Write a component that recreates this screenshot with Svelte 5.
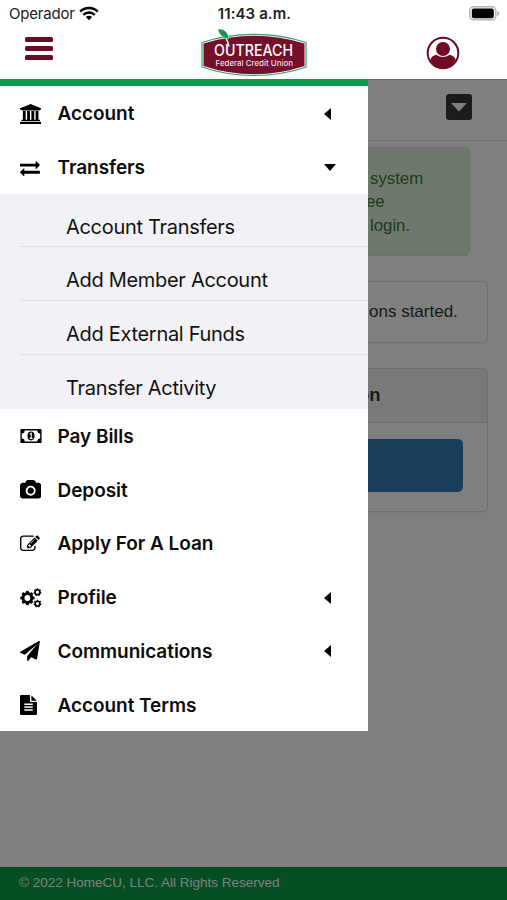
<script lang="ts">
  type MenuItem = {
    label: string;
    icon: string;
    children?: string[];
    expandable?: boolean;
  };

  const menu: MenuItem[] = [
    { label: 'Account', icon: 'bank', expandable: true },
    {
      label: 'Transfers',
      icon: 'exchange',
      expandable: true,
      children: ['Account Transfers', 'Add Member Account', 'Add External Funds', 'Transfer Activity']
    },
    { label: 'Pay Bills', icon: 'money' },
    { label: 'Deposit', icon: 'camera' },
    { label: 'Apply For A Loan', icon: 'edit' },
    { label: 'Profile', icon: 'cogs', expandable: true },
    { label: 'Communications', icon: 'plane', expandable: true },
    { label: 'Account Terms', icon: 'file' }
  ];

  // glyph width in font units, height is always 1792
  const icons: Record<string, { width: number; path: string }> = {
    bank: {
      width: 1920,
      path: 'M960 0l960 384v128h-128q0 26-20.5 45t-48.5 19H197q-28 0-48.5-19T128 512H0V384zM256 640h256v768h128V640h256v768h128V640h256v768h128V640h256v768h59q28 0 48.5 19t20.5 45v64H128v-64q0-26 20.5-45t48.5-19h59V640zm1595 960q28 0 48.5 19t20.5 45v128H0v-128q0-26 20.5-45t48.5-19h1782z'
    },
    exchange: {
      width: 1792,
      path: 'M1792 1184v192q0 13-9.5 22.5t-22.5 9.5h-1376v192q0 13-9.5 22.5t-22.5 9.5q-12 0-24-10l-319-320q-9-9-9-22 0-14 9-23l320-320q9-9 23-9 13 0 22.5 9.5t9.5 22.5v192h1376q13 0 22.5 9.5t9.5 22.5zm0-544q0 14-9 23l-320 320q-9 9-23 9-13 0-22.5-9.5t-9.5-22.5v-192h-1376q-13 0-22.5-9.5t-9.5-22.5v-192q0-13 9.5-22.5t22.5-9.5h1376v-192q0-14 9-23t23-9q12 0 24 10l319 319q9 9 9 23z'
    },
    camera: {
      width: 1920,
      path: 'M960 672q119 0 203.5 84.5t84.5 203.5-84.5 203.5-203.5 84.5-203.5-84.5-84.5-203.5 84.5-203.5 203.5-84.5zm704-416q106 0 181 75t75 181v896q0 106-75 181t-181 75h-1408q-106 0-181-75t-75-181v-896q0-106 75-181t181-75h224l51-136q19-49 69.5-84.5t103.5-35.5h512q53 0 103.5 35.5t69.5 84.5l51 136h224zm-704 1152q185 0 316.5-131.5t131.5-316.5-131.5-316.5-316.5-131.5-316.5 131.5-131.5 316.5 131.5 316.5 316.5 131.5z'
    },
    edit: {
      width: 1792,
      path: 'M888 1184l116-116-152-152-116 116v56h96v96h56zm440-720q-16-16-33 1l-350 350q-17 17-1 33t33-1l350-350q17-17 1-33zm80 594v190q0 119-84.5 203.5t-203.5 84.5h-832q-119 0-203.5-84.5t-84.5-203.5v-832q0-119 84.5-203.5t203.5-84.5h832q63 0 117 25 15 7 18 23 3 17-9 29l-49 49q-14 14-32 8-23-6-45-6h-832q-66 0-113 47t-47 113v832q0 66 47 113t113 47h832q66 0 113-47t47-113v-126q0-13 9-22l64-64q15-15 35-7t20 29zm-96-738l288 288-672 672h-288v-288zm444 132l-92 92-288-288 92-92q28-28 68-28t68 28l152 152q28 28 28 68t-28 68z'
    },
    plane: {
      width: 1792,
      path: 'M1764 11q33 24 27 64l-256 1536q-5 29-32 45-14 8-31 8-11 0-24-5l-453-185-242 295q-18 23-49 23-13 0-22-4-19-7-30.5-23.5t-11.5-36.5v-349l864-1059-1069 925-395-162q-37-14-40-55-2-40 32-59l1664-960q15-9 32-9 20 0 36 11z'
    },
    file: {
      width: 1536,
      path: 'M1468 476q14 14 28 36h-472v-472q22 14 36 28zm-476 164h544v1056q0 40-28 68t-68 28h-1344q-40 0-68-28t-28-68v-1600q0-40 28-68t68-28h800v544q0 40 28 68t68 28zm160 736v-64q0-14-9-23t-23-9h-704q-14 0-23 9t-9 23v64q0 14 9 23t23 9h704q14 0 23-9t9-23zm0-256v-64q0-14-9-23t-23-9h-704q-14 0-23 9t-9 23v64q0 14 9 23t23 9h704q14 0 23-9t9-23zm0-256v-64q0-14-9-23t-23-9h-704q-14 0-23 9t-9 23v64q0 14 9 23t23 9h704q14 0 23-9t9-23z'
    }
  };

  let open = $state('Transfers');

  function toggle(item: MenuItem) {
    if (!item.expandable) return;
    open = open === item.label ? '' : item.label;
  }
</script>

{#snippet gear(cx: number, cy: number, r: number, teeth: number)}
  <circle {cx} {cy} {r} fill="none" stroke="#000" stroke-width={r * 0.68} />
  {#each Array(teeth) as _, i}
    <rect
      x={cx - r * 0.3}
      y={cy - r * 1.62}
      width={r * 0.6}
      height={r * 0.5}
      transform="rotate({(360 / teeth) * i} {cx} {cy})"
    />
  {/each}
{/snippet}

{#snippet menuIcon(name: string)}
  {#if name === 'money'}
    <svg width="22" height="20" viewBox="0 0 22 20">
      <path
        fill-rule="evenodd"
        d="M1 3h20q.6 0 .6.6v12.8q0 .6-.6.6H1q-.6 0-.6-.6V3.600q0-.6.6-.6zM4.700 4.500a3 3 0 0 1-2.900 2.900v5.200a3 3 0 0 1 2.900 2.900h12.600a3 3 0 0 1 2.900-2.900V7.400a3 3 0 0 1-2.900-2.900z"
      />
      <ellipse cx="11" cy="10" rx="3.500" ry="4.400" />
      <path d="M9.800 8.300l1.400-1v4.900M9.600 12.400h3" fill="none" stroke="#fff" stroke-width="1.100" />
    </svg>
  {:else if name === 'cogs'}
    <svg width="22" height="20" viewBox="0 0 22 20">
      {@render gear(7.4, 10, 4.4, 8)}
      {@render gear(17.5, 4.2, 2.4, 7)}
      {@render gear(17.5, 15.6, 2.4, 7)}
    </svg>
  {:else}
    <svg width={icons[name].width / 90} height="19.9" viewBox="0 0 {icons[name].width} 1792">
      <path d={icons[name].path} />
    </svg>
  {/if}
{/snippet}

<div class="screen">
  <div class="status-bar">
    <div class="carrier">
      <span>Operador</span>
      <svg width="20" height="15" viewBox="0 0 20 15">
        <g fill="none" stroke="#000" stroke-width="2.500">
          <path d="M1.200 5.600a12.400 12.400 0 0 1 17.600 0" />
          <path d="M4.300 8.900a8 8 0 0 1 11.400 0" />
        </g>
        <path d="M10 14.200l-3.100-3.100a4.400 4.400 0 0 1 6.200 0z" />
      </svg>
    </div>
    <span class="time">11:43 a.m.</span>
    <svg class="battery" width="31" height="15" viewBox="0 0 31 15">
      <rect x=".8" y=".8" width="26" height="13" rx="3.800" fill="#fff" stroke="#b5b5b5" stroke-width="1.500" />
      <rect x="2.800" y="2.500" width="22" height="9.800" rx="2" />
      <path d="M28.300 5v5q2-.8 2-2.500t-2-2.500z" fill="#aaa" />
    </svg>
  </div>

  <header>
    <button class="burger" aria-label="Menu">
      <i></i><i></i><i></i>
    </button>
    <svg class="logo" width="108" height="50" viewBox="0 0 108 50">
      <path
        d="M2 14.500Q26 6.300 54 6.300t52 8.200v24.500Q82 47.500 54 47.500T2 39z"
        fill="#fff"
        stroke="#2f9f66"
        stroke-width="1.200"
      />
      <path d="M3.500 15.500Q28 7.700 54 7.700t50.500 7.800v22.500Q80 46.200 54 46.200T3.500 38z" fill="#74102b" />
      <path d="M22 5q5 4.500 7 13.500" fill="none" stroke="#e5f0e6" stroke-width="1.600" />
      <path d="M17.800 1q10-.5 11.200 9.700-9-.3-11.200-9.700z" fill="#14974c" stroke="#fff" stroke-width=".4" />
      <text class="logo-name" x="14" y="27.700" textLength="79" lengthAdjust="spacingAndGlyphs">OUTREACH</text>
      <text class="logo-sub" x="15.500" y="37.900" textLength="77.500" lengthAdjust="spacingAndGlyphs">Federal Credit Union</text>
    </svg>
    <svg class="avatar" width="34" height="34" viewBox="0 0 34 34">
      <circle cx="17" cy="17" r="15.300" fill="#fff" stroke="#6d0a26" stroke-width="2" />
      <circle cx="17" cy="13" r="7" fill="#6d0a26" />
      <path d="M4.300 24q1.300-4.500 6-5.300Q16.500 23.500 23.700 18.700q4.700.8 6 5.300Q25.500 32 17 32T4.300 24z" fill="#6d0a26" />
    </svg>
  </header>

  <div class="body">
    <main>
      <div class="toolbar">
        <button class="dropdown" aria-label="More">
          <svg width="16" height="9" viewBox="0 0 16 9"><path d="M0 0h16L8 8.500z" fill="#fff" /></svg>
        </button>
      </div>
      <div class="alert">
        <p>system</p>
        <p class="cut">ee</p>
        <p>login.</p>
      </div>
      <div class="card note">ons started.</div>
      <div class="card panel">
        <h4>on</h4>
        <div class="panel-body"><div class="primary"></div></div>
      </div>
    </main>
    <footer>© 2022 HomeCU, LLC. All Rights Reserved</footer>
    <div class="backdrop"></div>

    <nav>
      {#each menu as item}
        <button class="item" onclick={() => toggle(item)}>
          <span class="icon">{@render menuIcon(item.icon)}</span>
          <span class="label">{item.label}</span>
          {#if item.expandable}
            <span class="caret" class:down={open === item.label}></span>
          {/if}
        </button>
        {#if item.children && open === item.label}
          <ul>
            {#each item.children as child}
              <li>{child}</li>
            {/each}
          </ul>
        {/if}
      {/each}
    </nav>
  </div>
</div>

<style>
  :global(body) {
    margin: 0;
    background: #fff;
  }

  .screen {
    display: flex;
    flex-direction: column;
    width: 507px;
    height: 900px;
    overflow: hidden;
    font-family: 'Liberation Sans', Arial, sans-serif;
  }

  button {
    border: none;
    background: none;
    padding: 0;
    margin: 0;
  }

  svg {
    display: block;
  }

  .status-bar {
    display: grid;
    grid-template-columns: 1fr auto 1fr;
    align-items: center;
    height: 27px;
    padding: 0 7px 0 9px;
    box-sizing: border-box;
    font-family: Inter, sans-serif;
    font-size: 15px;
    color: #222;
  }

  .carrier {
    display: flex;
    align-items: center;
    gap: 4px;
    letter-spacing: -0.2px;
  }

  .time {
    font-weight: 600;
    letter-spacing: 0.1px;
  }

  .battery {
    justify-self: end;
  }

  header {
    display: flex;
    align-items: center;
    justify-content: space-between;
    flex: none;
    height: 52px;
    padding: 0 47px 0 25px;
    box-sizing: border-box;
  }

  .burger {
    display: flex;
    flex-direction: column;
    gap: 4px;
    margin-bottom: 9px;
  }

  .burger i {
    width: 28px;
    height: 5px;
    border-radius: 1.5px;
    background: #6d0a26;
  }

  .logo {
    margin-left: 28px;
    margin-bottom: 1px;
  }

  .logo-name {
    font: 500 15.5px Inter, sans-serif;
    fill: #fff;
  }

  .logo-sub {
    font: 500 7.6px Inter, sans-serif;
    fill: #f3dfe4;
  }

  .body {
    position: relative;
    display: flex;
    flex-direction: column;
    flex: 1;
  }

  main {
    flex: 1;
    border-top: 1px solid #ccc;
  }

  .toolbar {
    display: flex;
    justify-content: flex-end;
    align-items: center;
    height: 61px;
    padding: 0 35px 6px 0;
    box-sizing: border-box;
    border-bottom: 1px solid #e7e7e7;
  }

  .dropdown {
    display: flex;
    align-items: center;
    justify-content: center;
    width: 26px;
    height: 26px;
    border-radius: 3px;
    background: #363636;
  }

  .alert {
    height: 109px;
    margin: 6px 37px 0 19px;
    padding: 18.5px 0 0 350px;
    box-sizing: border-box;
    border: 1px solid #d6e9c6;
    border-radius: 5px;
    background: #dff0d8;
    color: #3c763d;
    font-size: 16.8px;
    line-height: 23.5px;
  }

  .alert p {
    margin: 0;
  }

  .alert .cut {
    margin-left: -4px;
  }

  .card {
    margin: 25px 19px 0;
    box-sizing: border-box;
    border: 1px solid #ddd;
    border-radius: 5px;
    box-shadow: 0 1px 1px rgba(0, 0, 0, 0.05);
  }

  .note {
    height: 62px;
    padding-left: 349px;
    color: #333;
    font-size: 17px;
    line-height: 59px;
  }

  .panel {
    height: 144px;
    overflow: hidden;
  }

  h4 {
    height: 53px;
    margin: 0;
    padding-left: 338px;
    border-bottom: 1px solid #ddd;
    background: #f5f5f5;
    color: #333;
    font-size: 18.5px;
    line-height: 52px;
  }

  .panel-body {
    padding: 16px 24px;
  }

  .primary {
    height: 53px;
    border-radius: 5px;
    background: #337ab7;
  }

  footer {
    height: 33px;
    padding-left: 19px;
    background: #0a9a47;
    color: #fff;
    font-size: 13.5px;
    line-height: 31px;
  }

  .backdrop {
    position: absolute;
    inset: 0;
    background: rgba(0, 0, 0, 0.5);
  }

  /* slides over the dimmed page */
  nav {
    position: absolute;
    top: 0;
    left: 0;
    width: 368px;
    border-top: 7px solid #0b9a47;
    box-sizing: border-box;
    background: #fff;
    font-family: Inter, sans-serif;
    color: #111;
  }

  .item {
    display: flex;
    align-items: center;
    width: 100%;
    height: 53.75px;
    padding: 2px 32px 0 20px;
    box-sizing: border-box;
    font: 600 19px Inter, sans-serif;
    letter-spacing: -0.05px;
    color: #0c0c0c;
    text-align: left;
  }

  .icon {
    width: 37.5px;
  }

  .label {
    flex: 1;
  }

  .caret {
    width: 0;
    height: 0;
    margin-right: 5px;
    border: 6px solid transparent;
    border-left: none;
    border-right: 7px solid #000;
  }

  .caret.down {
    margin-right: 0;
    border: 6px solid transparent;
    border-top: 7px solid #000;
    border-bottom: none;
  }

  ul {
    margin: 0;
    padding: 0 0 0 20px;
    list-style: none;
    background: #f1f1f6;
  }

  li {
    height: 53.75px;
    padding: 12px 0 0 46px;
    box-sizing: border-box;
    border-bottom: 1px solid #dfdfe4;
    font-size: 20px;
    letter-spacing: -0.3px;
    line-height: 42px;
  }

  li:last-child {
    border-bottom-color: transparent;
  }
</style>
